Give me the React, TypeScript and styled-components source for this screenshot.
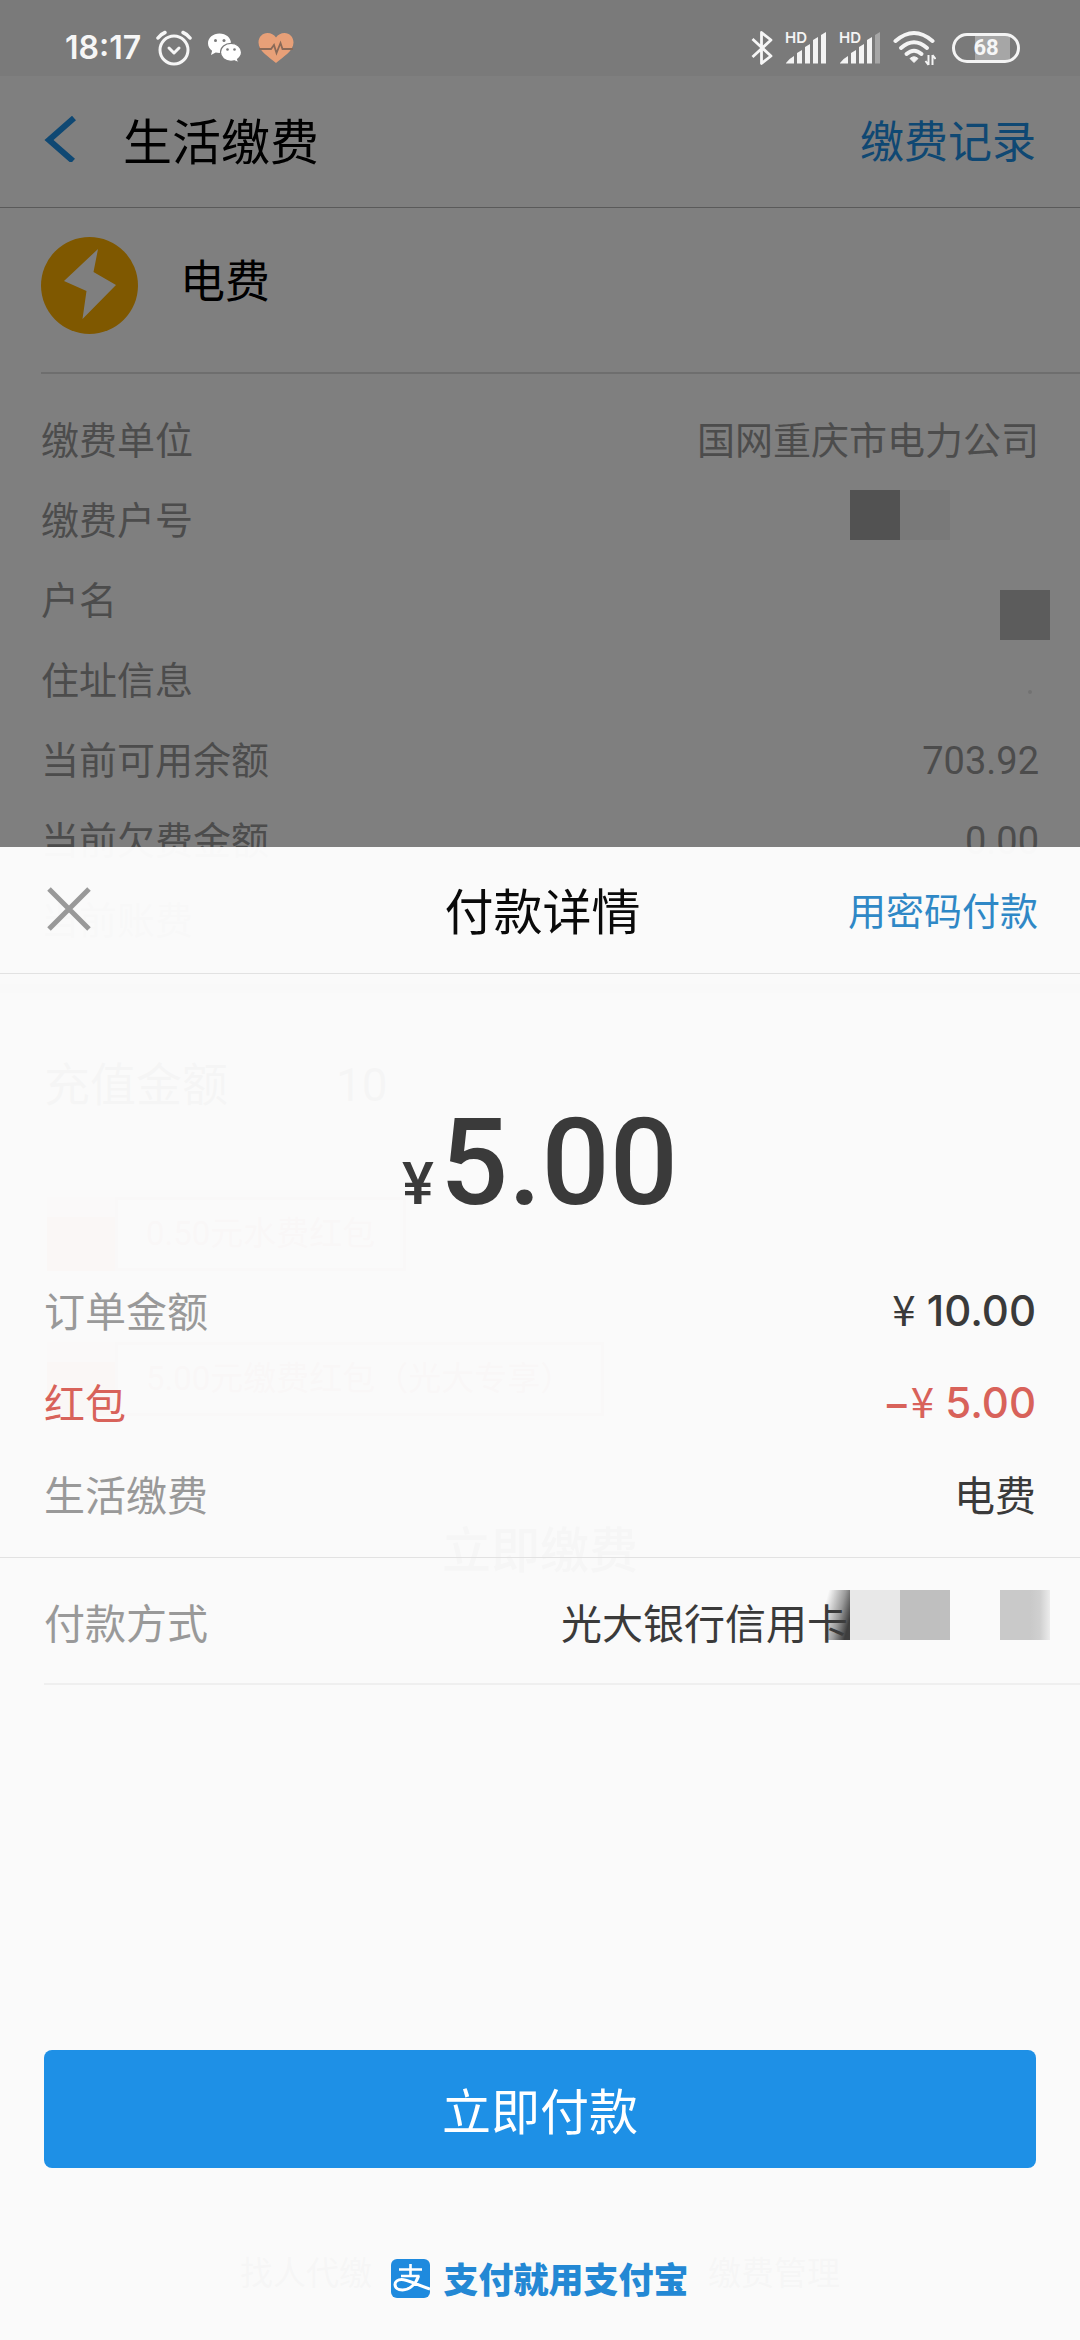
import React from "react";
import styled, { createGlobalStyle } from "styled-components";

const sans = `Roboto, "Noto Sans CJK SC", sans-serif`;
const cjk = `"Noto Sans CJK SC", sans-serif`;
const digits = `Inter, "Noto Sans CJK SC", sans-serif`;

const GlobalStyle = createGlobalStyle`
  *, *::before, *::after { box-sizing: border-box; }
  body { margin: 0; background: #fff; font-family: ${sans}; }
  button { border: 0; padding: 0; background: none; font-family: inherit; cursor: pointer; }
  h1, h2, dl, dd, dt, p { margin: 0; font-weight: 400; }
  svg { display: block; flex: none; }
`;

const Screen = styled.div`
  position: relative;
  min-height: 100vh;
  overflow: hidden;
`;

/* ---------- status bar ---------- */

const StatusBar = styled.header`
  position: relative;
  z-index: 3;
  display: flex;
  align-items: center;
  justify-content: space-between;
  height: 76px;
  padding: 19px 60px 0 65px;
  background: #7a7a7a;
  color: #f6f6f6;
`;

const StatusGroup = styled.div<{ $gap: number }>`
  display: flex;
  align-items: center;
  gap: ${(p) => p.$gap}px;
`;

const Clock = styled.time`
  font: 600 32px/40px ${digits};
`;

const Battery = styled.span`
  display: flex;
  align-items: center;
  justify-content: center;
  width: 68px;
  height: 30px;
  margin-left: 4px;
  border: 3px solid #f4f4f4;
  border-radius: 15px;
  background: linear-gradient(to right, transparent 33%, #a6a6a6 33%, #a6a6a6 88%, transparent 88%);
  font: 700 22px/24px ${sans};
`;

/* ---------- bill page ---------- */

const NavBar = styled.nav`
  display: flex;
  align-items: center;
  height: 132px;
  padding: 0 44px 6px;
  border-bottom: 1px solid #b4b4b4;
`;

const BackButton = styled.button`
  display: flex;
  width: 79px;
`;

const PageTitle = styled.h1`
  flex: 1;
  font: 400 49px/64px ${cjk};
  color: #000;
`;

const RecordsLink = styled.a`
  font: 400 44px/56px ${cjk};
  color: #1e90e6;
  text-decoration: none;
`;

const BillType = styled.section`
  display: flex;
  align-items: flex-start;
  gap: 42px;
  margin-left: 41px;
  padding: 29px 0 38px;
  border-bottom: 2px solid #dcdcdc;
`;

const BillName = styled.h2`
  padding-top: 12px;
  font: 400 45px/60px ${cjk};
  color: #000;
`;

const BillFacts = styled.dl`
  padding: 26px 41px 24px;
`;

const Fact = styled.div`
  position: relative;
  display: flex;
  align-items: center;
  justify-content: space-between;
  height: 80px;
  padding-top: 2px;
  font: 400 38px/52px ${sans};
  color: #999;
`;

const FactMask = styled.dd<{ $top: number; $right: number }>`
  position: absolute;
  top: ${(p) => p.$top}px;
  right: ${(p) => p.$right}px;
  display: flex;
`;

const MaskCell = styled.span<{ $fill: string }>`
  width: 50px;
  height: 50px;
  background: ${(p) => p.$fill};
`;

const Speck = styled.span`
  display: block;
  width: 4px;
  height: 4px;
  margin: 22px 7px 0 0;
  border-radius: 2px;
  background: #e4e4e4;
`;

const SectionGap = styled.div`
  height: 9px;
  background: #d8d8d8;
`;

const TopUp = styled.p`
  display: flex;
  gap: 108px;
  padding: 60px 44px 80px;
  font: 400 46px/64px ${sans};
  color: #222;
`;

const Coupon = styled.div`
  display: flex;
  width: max-content;
  margin: 0 0 71px 47px;
`;

const CouponGift = styled.span`
  width: 68px;
  height: 74px;
  border-top: 20px solid #f0d8c0;
  background: #ff6a58;
`;

const CouponLabel = styled.span`
  padding: 0 28px;
  border: 3px solid #dc8c8c;
  font: 400 33px/68px ${sans};
  color: #d06464;
`;

const PayBill = styled.p`
  padding-top: 28px;
  text-align: center;
  font: 500 49px/64px ${cjk};
  color: #444;
`;

const PageLinks = styled.p`
  position: absolute;
  right: 240px;
  bottom: 45px;
  left: 240px;
  display: flex;
  justify-content: space-between;
  font: 400 33px/48px ${cjk};
  color: #333;
`;

const Scrim = styled.div`
  position: absolute;
  inset: 0;
  z-index: 1;
  background: rgba(0, 0, 0, 0.5);
`;

/* ---------- payment sheet ---------- */

const Sheet = styled.section`
  position: absolute;
  right: 0;
  bottom: 0;
  left: 0;
  z-index: 2;
  background: rgba(255, 255, 255, 0.96);
  color: #3a3a3a;
`;

const SheetHeader = styled.div`
  display: grid;
  grid-template-columns: 1fr auto 1fr;
  align-items: center;
  height: 127px;
  padding: 0 42px 2px 47px;
  border-bottom: 1px solid #e2e2e2;
`;

const CloseButton = styled.button`
  justify-self: start;
`;

const SheetTitle = styled.h2`
  font: 400 49px/64px ${cjk};
  color: #0a0a0a;
`;

const PasswordButton = styled.button`
  && {
    justify-self: end;
    font: 400 38px/52px ${cjk};
    color: #2f88c6;
  }
`;

const Total = styled.p`
  display: flex;
  align-items: baseline;
  justify-content: center;
  gap: 6px;
  padding: 119px 0 32px;
  font: 500 120px/140px ${sans};
`;

const TotalSign = styled.span`
  font-size: 60px;
  line-height: 64px;
`;

const Items = styled.dl`
  padding: 0 44px 16px;
  border-bottom: 1px solid #e2e2e2;
`;

const Item = styled.div<{ $accent?: boolean }>`
  display: flex;
  align-items: center;
  justify-content: space-between;
  height: 92px;
  padding-bottom: 4px;
  font: 400 41px/56px ${cjk};
  color: ${(p) => (p.$accent ? "#d8625a" : "inherit")};
`;

const ItemLabel = styled.dt<{ $accent?: boolean }>`
  color: ${(p) => (p.$accent ? "inherit" : "#999")};
`;

const Money = styled.dd`
  font: 500 42px/56px ${digits};
`;

const Yen = styled.span`
  font-family: ${cjk};
  font-weight: 400;
`;

const Method = styled.div`
  position: relative;
  display: flex;
  align-items: center;
  gap: 353px;
  height: 127px;
  margin-left: 44px;
  border-bottom: 2px solid #efefef;
  font: 400 41px/56px ${cjk};
  white-space: nowrap;
`;

const MethodLabel = styled.span`
  color: #999;
`;

const MethodMask = styled.span`
  position: absolute;
  top: 32px;
  right: 30px;
  display: flex;
`;

const MaskEdge = styled.span`
  width: 25px;
  height: 50px;
  background: linear-gradient(105deg, rgba(58, 58, 58, 0) 10%, rgba(58, 58, 58, 0.5) 55%, #3e3e3e 85%);
`;

const PayButton = styled.button`
  && {
    display: block;
    width: calc(100% - 88px);
    height: 118px;
    margin: 365px 44px 0;
    border-radius: 8px;
    background: #1e90e6;
    color: #fff;
    font: 400 49px/64px ${cjk};
  }
`;

const Brand = styled.footer`
  display: flex;
  align-items: center;
  justify-content: center;
  gap: 13px;
  padding: 86px 0 38px;
  font: 900 35px/48px ${cjk};
  color: #2388d4;
`;

/* ---------- icons ---------- */

const AlarmIcon = () => (
  <svg width="36" height="36" viewBox="0 0 36 36" fill="none" stroke="#f6f6f6" strokeWidth="3" strokeLinecap="round" aria-hidden="true">
    <circle cx="18" cy="20" r="14" />
    <path d="M2 8Q5 4 9 2.500M34 8Q31 4 27 2.500" strokeWidth="3.500" />
    <path d="M13 18l5 5 5-5" strokeLinejoin="round" />
  </svg>
);

const WeChatIcon = () => (
  <svg width="36" height="32" viewBox="0 0 36 32" aria-hidden="true">
    <path d="M12.500 1.500C6 1.500 1 5.800 1 11.300c0 3 1.600 5.700 4.100 7.500L4 23l4.700-2.400c1.200.3 2.500.5 3.800.5C19 21 24 16.800 24 11.300S19 1.500 12.500 1.500z" fill="#fff" />
    <path d="M24 11.300c-6 0-10.500 4-10.500 9s4.500 9 10.500 9c1.200 0 2.400-.2 3.500-.5l4.200 2-1.100-3.600c2.400-1.600 3.900-4.100 3.900-6.900 0-5-4.500-9-10.500-9z" fill="#fff" stroke="#7a7a7a" strokeWidth="1.200" />
    <g fill="#7a7a7a">
      <circle cx="8.500" cy="8.500" r="1.500" /><circle cx="17" cy="8.500" r="1.500" />
      <circle cx="20.500" cy="17.500" r="1.300" /><circle cx="27.500" cy="17.500" r="1.300" />
    </g>
  </svg>
);

const HeartIcon = () => (
  <svg width="36" height="32" viewBox="0 0 36 32" aria-hidden="true">
    <path d="M18 31C11 25 .5 19 .5 10.500.5 5 4.500 1 9.500 1c3.500 0 6.500 1.500 8.500 4.500C20 2.500 23 1 26.500 1c5 0 9 4 9 9.500C35.500 19 25 25 18 31z" fill="#e8a078" />
    <path d="M1 17h12l3-4 2.500 8 4-10 2 6H35" fill="none" stroke="#8a6a58" strokeWidth="1.800" />
  </svg>
);

const BluetoothIcon = () => (
  <svg width="22" height="36" viewBox="0 0 22 36" fill="none" stroke="#f6f6f6" strokeWidth="2.800" aria-hidden="true">
    <path d="M1.500 9L20 26l-9.500 7.500v-31L20 10 1.500 27" strokeLinejoin="round" />
  </svg>
);

const SignalIcon = ({ dimLast }: { dimLast?: boolean }) => (
  <svg width="42" height="44" viewBox="0 -5 42 44" fill="#f4f4f4" aria-hidden="true">
    <text x="0" y="12" fontFamily="Inter, sans-serif" fontWeight="600" fontSize="15">HD</text>
    <path d="M1 32q4-5 8-7v7.500H1zM12 22l5-3v13.500h-5zM20 16l5-3v19.500h-5zM28 9l5-3v26.500h-5z" />
    <path d="M36 4l5-3v31.500h-5z" fill={dimLast ? "#a6a6a6" : "#f4f4f4"} />
  </svg>
);

const WifiIcon = () => (
  <svg width="43" height="36" viewBox="0 0 43 36" aria-hidden="true">
    <g fill="none" stroke="#f4f4f4" strokeWidth="4" strokeLinecap="round">
      <path d="M2.500 11Q21 -5 39.500 11" />
      <path d="M8 18Q21 6.500 34 18" />
      <path d="M13.500 24Q21 17.500 28.500 24" />
    </g>
    <path d="M17 28.500q4-3.500 8 0l-4 4z" fill="#f4f4f4" stroke="#f4f4f4" strokeLinejoin="round" />
    <path d="M35.500 25v10M35.500 35l-3-4M39.500 35V25M39.500 25l3 4" stroke="#f4f4f4" strokeWidth="2" fill="none" />
  </svg>
);

const BackIcon = () => (
  <svg width="34" height="46" viewBox="0 0 34 46" aria-hidden="true">
    <path d="M30 2L5 24l24 21" fill="none" stroke="#1e90e6" strokeWidth="6" />
  </svg>
);

const PowerIcon = () => (
  <svg width="97" height="97" viewBox="0 0 97 97" aria-hidden="true">
    <circle cx="48.500" cy="48.500" r="48.500" fill="#ffb000" />
    <path d="M57 12L52.500 35 75 48 41.500 82 45.500 54 23 44z" fill="#fff" />
  </svg>
);

const CloseIcon = () => (
  <svg width="44" height="44" viewBox="0 0 44 44" aria-hidden="true">
    <path d="M2 2l40 40M42 2L2 42" stroke="#999" strokeWidth="5" />
  </svg>
);

const AlipayIcon = () => (
  <svg width="39" height="39" viewBox="0 0 39 39" aria-hidden="true">
    <rect width="39" height="39" rx="6" fill="#1e8ade" />
    <g fill="none" stroke="#fff" strokeWidth="2.600">
      <path d="M8 10.500h23M19.500 5v12M10 17h18.500" />
      <path d="M27.500 17C25 25 18.500 31 11.500 31 6.500 31 4 28.500 4 25.500c0-3 3-5 6.500-5 6.500 0 14 5 28.500 9.500" strokeWidth="3" />
    </g>
  </svg>
);

const facts = [
  { label: "缴费单位", value: "国网重庆市电力公司" },
  { label: "缴费户号", mask: "account" },
  { label: "户名", mask: "holder" },
  { label: "住址信息", mask: "address" },
  { label: "当前可用余额", value: "703.92" },
  { label: "当前欠费金额", value: "0.00" },
  { label: "当前账费" },
];

export default function App() {
  return (
    <Screen>
      <GlobalStyle />
      <StatusBar>
        <StatusGroup $gap={15}>
          <Clock>18:17</Clock>
          <AlarmIcon />
          <WeChatIcon />
          <HeartIcon />
        </StatusGroup>
        <StatusGroup $gap={12}>
          <BluetoothIcon />
          <SignalIcon />
          <SignalIcon dimLast />
          <WifiIcon />
          <Battery>68</Battery>
        </StatusGroup>
      </StatusBar>

      <main>
        <NavBar>
          <BackButton aria-label="返回"><BackIcon /></BackButton>
          <PageTitle>生活缴费</PageTitle>
          <RecordsLink href="#records">缴费记录</RecordsLink>
        </NavBar>
        <BillType>
          <PowerIcon />
          <BillName>电费</BillName>
        </BillType>
        <BillFacts>
          {facts.map(({ label, value, mask }) => (
            <Fact key={label}>
              <dt>{label}</dt>
              {value && <dd>{value}</dd>}
              {mask === "account" && (
                <FactMask $top={10} $right={89}>
                  <MaskCell $fill="#a4a4a4" />
                  <MaskCell $fill="#f2f2f2" />
                </FactMask>
              )}
              {mask === "holder" && (
                <FactMask $top={30} $right={-11}>
                  <MaskCell $fill="#b8b8b8" />
                </FactMask>
              )}
              {mask === "address" && <dd><Speck /></dd>}
            </Fact>
          ))}
        </BillFacts>
        <SectionGap />
        <TopUp><span>充值金额</span><span>10</span></TopUp>
        <Coupon><CouponGift /><CouponLabel>0.50元水费红包</CouponLabel></Coupon>
        <Coupon><CouponGift /><CouponLabel>5.00元缴费红包（光大专享）</CouponLabel></Coupon>
        <PayBill>立即缴费</PayBill>
        <PageLinks><span>找人代缴</span><span>缴费管理</span></PageLinks>
      </main>

      <Scrim />

      <Sheet role="dialog" aria-labelledby="sheet-title">
        <SheetHeader>
          <CloseButton aria-label="关闭"><CloseIcon /></CloseButton>
          <SheetTitle id="sheet-title">付款详情</SheetTitle>
          <PasswordButton>用密码付款</PasswordButton>
        </SheetHeader>
        <Total><TotalSign>¥</TotalSign>5.00</Total>
        <Items>
          <Item>
            <ItemLabel>订单金额</ItemLabel>
            <Money><Yen>¥</Yen> 10.00</Money>
          </Item>
          <Item $accent>
            <ItemLabel $accent>红包</ItemLabel>
            <Money>−<Yen>¥</Yen> 5.00</Money>
          </Item>
          <Item>
            <ItemLabel>生活缴费</ItemLabel>
            <dd>电费</dd>
          </Item>
        </Items>
        <Method>
          <MethodLabel>付款方式</MethodLabel>
          <span>光大银行信用卡</span>
          <MethodMask>
            <MaskEdge />
            <MaskCell $fill="#e8e8e8" />
            <MaskCell $fill="#bfbfbf" />
            <MaskCell $fill="transparent" />
            <MaskCell $fill="linear-gradient(to right, #c9c9c9 60%, #d0d0d0 80%, #ececec)" />
          </MethodMask>
        </Method>
        <PayButton>立即付款</PayButton>
        <Brand><AlipayIcon />支付就用支付宝</Brand>
      </Sheet>
    </Screen>
  );
}
